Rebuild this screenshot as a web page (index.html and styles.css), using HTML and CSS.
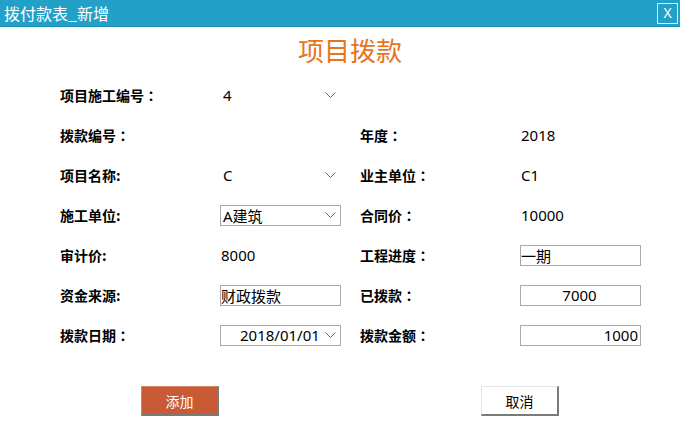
FILE: index.html
```html
<!DOCTYPE html>
<html lang="zh-CN">
<head>
    <meta charset="UTF-8">
    <title>拨付款表_新增</title>
    <link rel="stylesheet" href="styles.css">
</head>
<body>
    <div class="titlebar">
        <span class="title">拨付款表_新增</span>
        <button class="close">X</button>
    </div>

    <h1 class="heading">项目拨款</h1>

    <div class="form">
        <div class="label">项目施工编号<span class="colon" lang="zh-TW">：</span></div>
        <div class="select plain"><span>4</span><svg class="chev" width="11" height="6" viewBox="0 0 11 6"><polyline points="0.5,0.5 5.5,5.5 10.5,0.5" /></svg></div>
        <div></div>
        <div></div>

        <div class="label">拨款编号<span class="colon" lang="zh-TW">：</span></div>
        <div></div>
        <div class="label">年度<span class="colon" lang="zh-TW">：</span></div>
        <div class="value">2018</div>

        <div class="label">项目名称:</div>
        <div class="select plain"><span>C</span><svg class="chev" width="11" height="6" viewBox="0 0 11 6"><polyline points="0.5,0.5 5.5,5.5 10.5,0.5" /></svg></div>
        <div class="label">业主单位<span class="colon" lang="zh-TW">：</span></div>
        <div class="value">C1</div>

        <div class="label">施工单位:</div>
        <div class="select boxed"><span>A建筑</span><svg class="chev" width="11" height="6" viewBox="0 0 11 6"><polyline points="0.5,0.5 5.5,5.5 10.5,0.5" /></svg></div>
        <div class="label">合同价<span class="colon" lang="zh-TW">：</span></div>
        <div class="value">10000</div>

        <div class="label">审计价:</div>
        <div class="value">8000</div>
        <div class="label">工程进度<span class="colon" lang="zh-TW">：</span></div>
        <input class="field" value="一期">

        <div class="label">资金来源:</div>
        <input class="field" value="财政拨款">
        <div class="label">已拨款<span class="colon" lang="zh-TW">：</span></div>
        <input class="field center" value="7000">

        <div class="label">拨款日期<span class="colon" lang="zh-TW">：</span></div>
        <div class="select boxed date"><span>2018/01/01</span><svg class="chev" width="11" height="6" viewBox="0 0 11 6"><polyline points="0.5,0.5 5.5,5.5 10.5,0.5" /></svg></div>
        <div class="label">拨款金额<span class="colon" lang="zh-TW">：</span></div>
        <input class="field right" value="1000">
    </div>

    <div class="actions">
        <button class="btn btn-add">添加</button>
        <button class="btn btn-cancel">取消</button>
    </div>
</body>
</html>
```

FILE: styles.css
```css
body {
    margin: 0;
    background-color: #fff;
    color: #000;
    font-family: "Noto Sans", "Noto Sans CJK SC", sans-serif;
    width: 680px;
    height: 435px;
    overflow: hidden;
}
.titlebar {
    height: 26px;
    background-color: #23a0c8;
    border-bottom: 1px solid #1a8fb6;
    display: flex;
    align-items: center;
    justify-content: space-between;
    padding: 0 2px 0 4px;
}
.title {
    color: #fff;
    font-family: "Noto Sans CJK SC", sans-serif;
    font-size: 16px;
}
.close {
    width: 21px;
    height: 21px;
    border: 1px solid #dceff6;
    background: transparent;
    color: #fff;
    font-family: "Noto Sans", sans-serif;
    font-size: 14px;
    padding: 0;
    line-height: 18px;
}
.heading {
    margin: 0 0 2px 0;
    padding-left: 20px;
    height: 46px;
    line-height: 46px;
    text-align: center;
    font-family: "Noto Sans CJK SC", sans-serif;
    font-weight: normal;
    font-size: 26px;
    color: #e8741c;
}
.form {
    display: grid;
    grid-template-columns: 160px 140px 160px 120px;
    grid-auto-rows: 40px;
    align-items: center;
    padding-left: 60px;
}
.label {
    font-family: "Noto Sans CJK SC", sans-serif;
    font-weight: bold;
    font-size: 14px;
}
/* full-width colon sits centred in its box, as in the original */
.colon {
    font-family: "Noto Sans CJK TC", sans-serif;
}
.value {
    font-size: 15px;
    padding-left: 1px;
}
.select {
    width: 121px;
    height: 21px;
    box-sizing: border-box;
    display: flex;
    align-items: center;
    justify-content: space-between;
    font-size: 15px;
    padding: 0 4px 0 2px;
}
.select.boxed {
    border: 1px solid #a9a9a9;
}
.select.plain {
    padding-left: 3px;
    padding-right: 5px;
}
.select.date {
    padding-left: 19px;
}
.chev {
    fill: none;
    stroke: #666;
    stroke-width: 1;
}
.field {
    width: 121px;
    height: 21px;
    box-sizing: border-box;
    border: 1px solid #a9a9a9;
    padding: 0 2px 0 0;
    margin: 0;
    font-family: "Noto Sans", "Noto Sans CJK SC", sans-serif;
    font-size: 15px;
    color: #000;
    outline: none;
}
.field.center {
    text-align: center;
}
.field.right {
    text-align: right;
}
.actions {
    display: flex;
    gap: 262px;
    padding-left: 141px;
    margin-top: 31px;
}
.btn {
    width: 78px;
    height: 30px;
    box-sizing: border-box;
    font-family: "Noto Sans CJK SC", sans-serif;
    font-size: 14px;
    padding: 0;
    border-top: 1px solid #e4e4e4;
    border-left: 1px solid #e4e4e4;
    border-right: 2px solid #7a7a7a;
    border-bottom: 2px solid #7a7a7a;
}
.btn-add {
    background-color: #c85b36;
    color: #fff;
    border-top-color: #d7866a;
    border-left-color: #d7866a;
}
.btn-cancel {
    background-color: #fff;
    color: #000;
}
```
